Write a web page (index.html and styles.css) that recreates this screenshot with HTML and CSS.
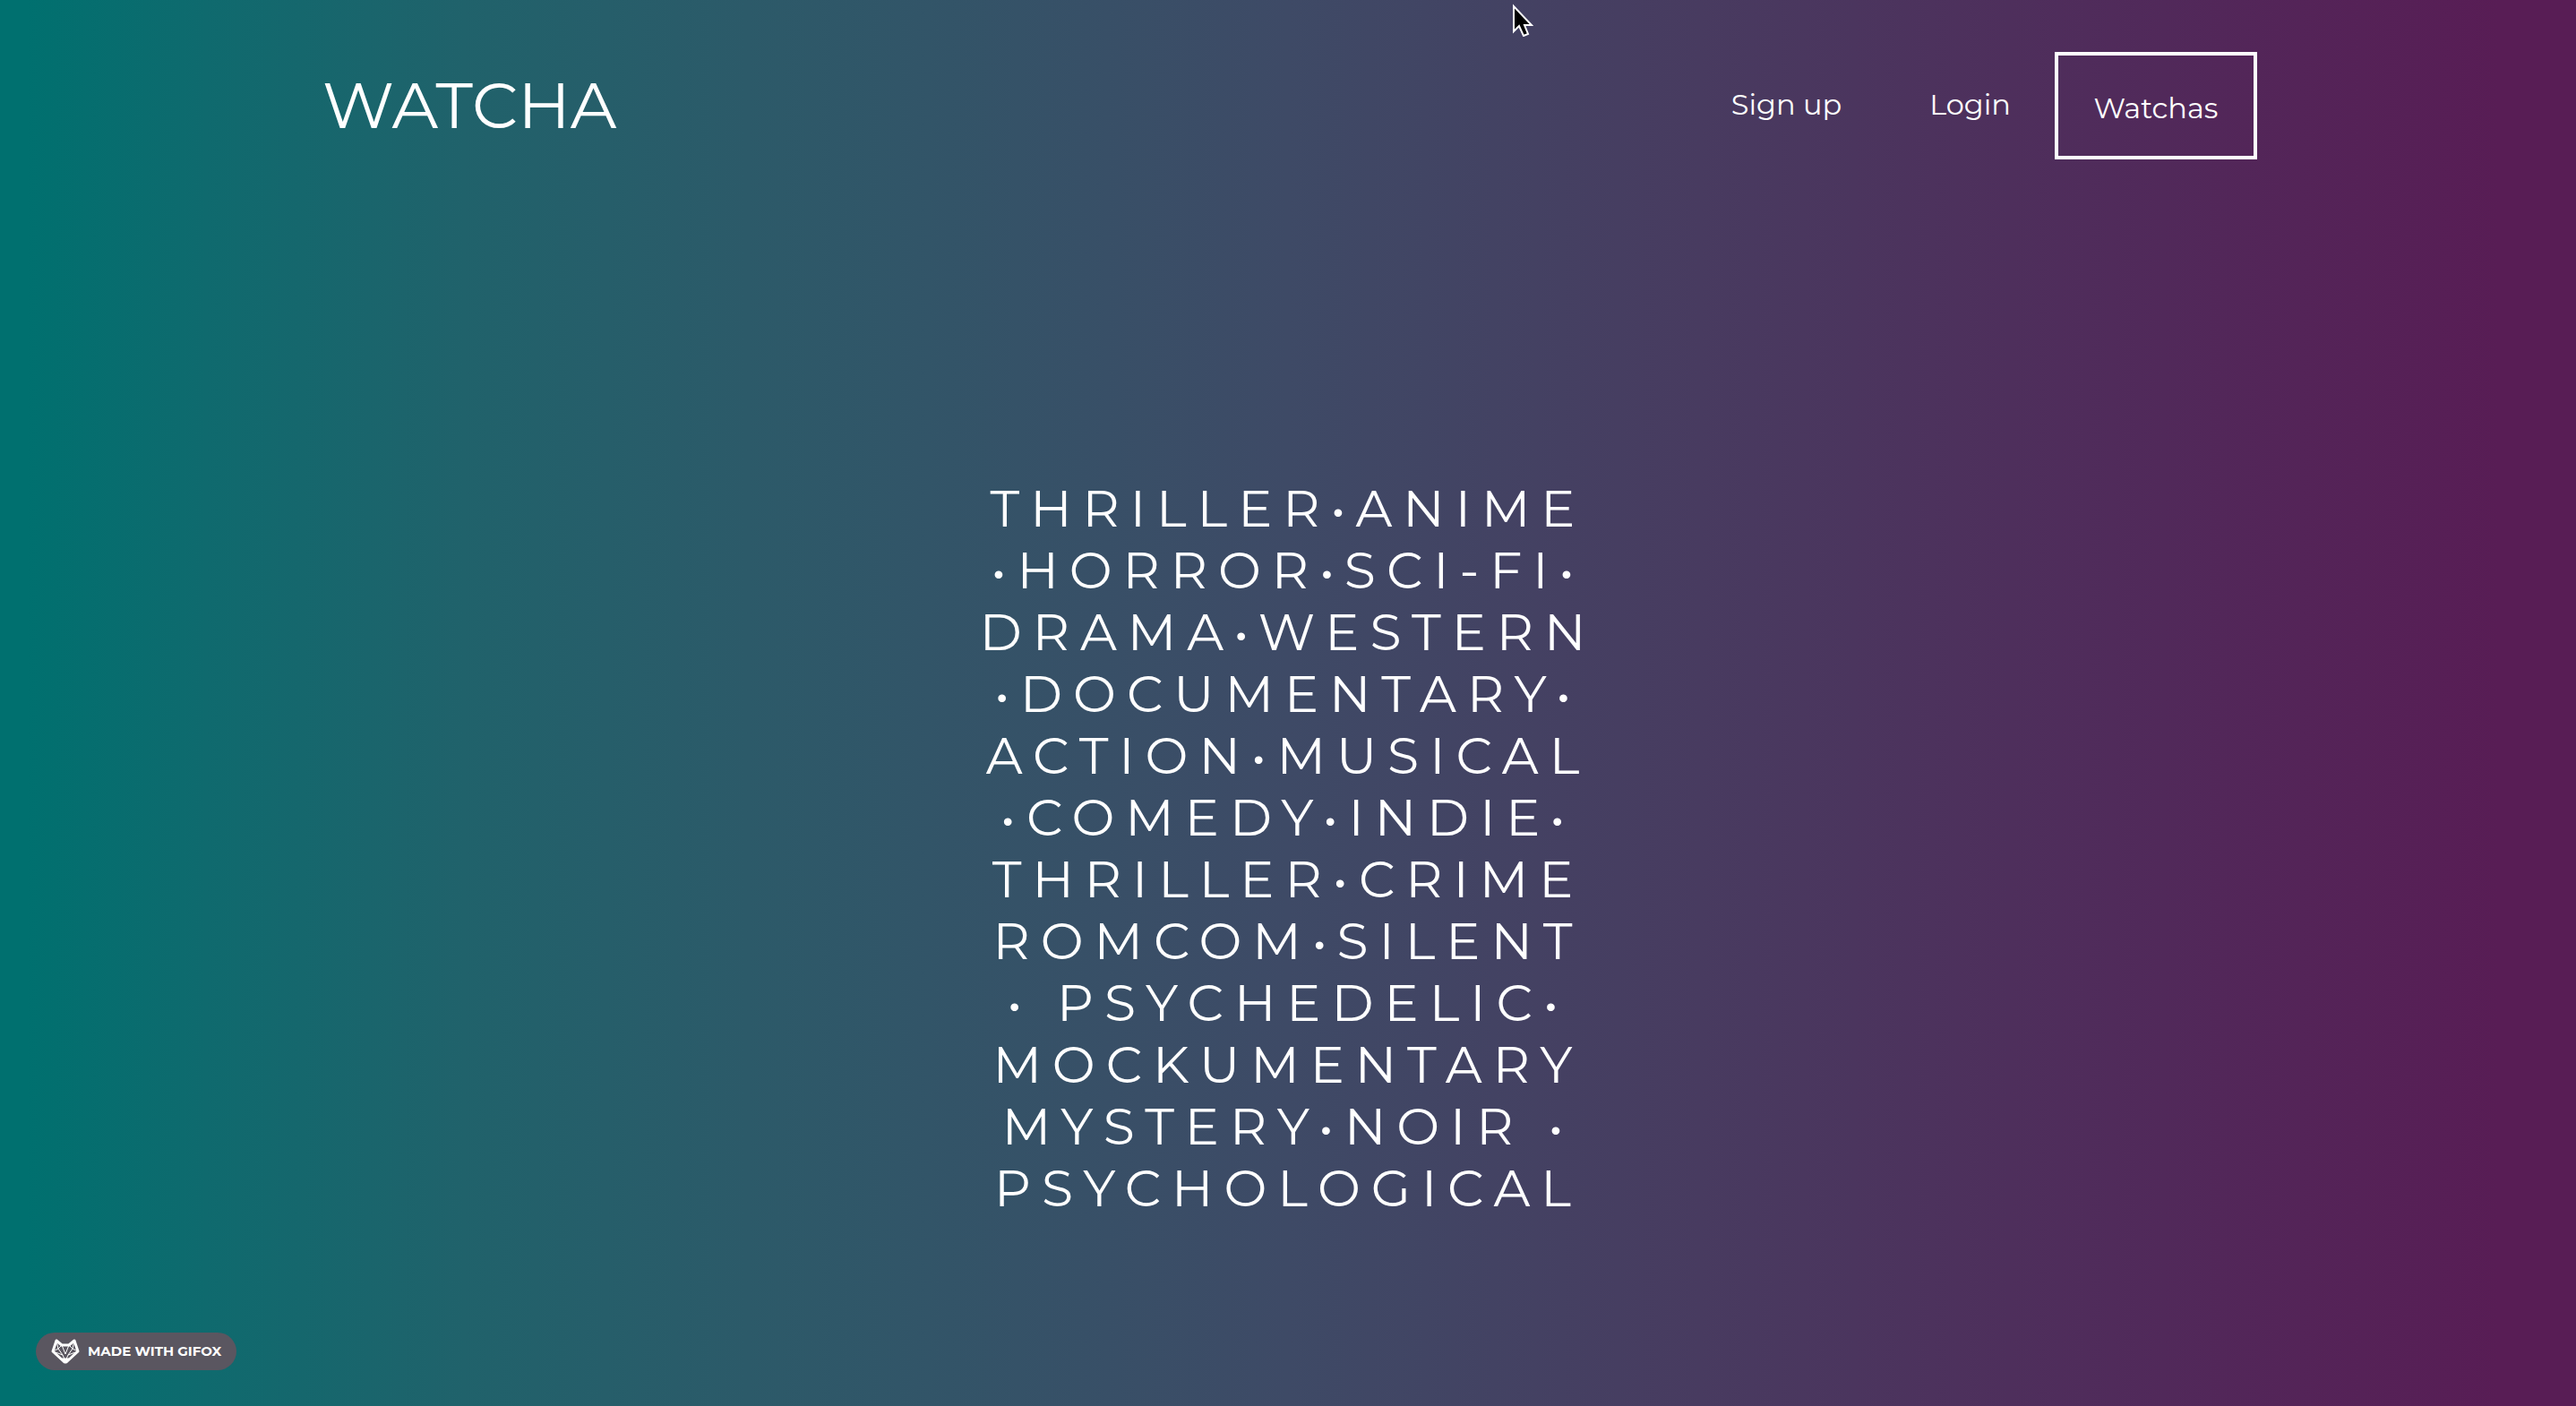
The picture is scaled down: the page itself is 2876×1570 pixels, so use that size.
FILE: index.html
```html
<!DOCTYPE html>
<html lang="en">
<head>
<meta charset="utf-8">
<title>Watcha</title>
<link rel="stylesheet" href="styles.css">
</head>
<body>
<header class="site-header">
  <a class="brand" href="#">WATCHA</a>
  <nav class="nav">
    <a class="nav-link" href="#">Sign up</a>
    <a class="nav-link" href="#">Login</a>
    <button class="nav-button" type="button">Watchas</button>
  </nav>
</header>
<main class="hero">
  <p class="genres">THRILLER•ANIME<br>•HORROR•SCI-FI•<br>DRAMA•WESTERN<br>•DOCUMENTARY•<br>ACTION•MUSICAL<br>•COMEDY•INDIE•<br>THRILLER•CRIME<br>ROMCOM•SILENT<br>• PSYCHEDELIC•<br>MOCKUMENTARY<br>MYSTERY•NOIR •<br>PSYCHOLOGICAL</p>
</main>
<a class="badge" href="#">
  <svg class="badge-icon" viewBox="0 0 32 30" aria-hidden="true"><path class="head" d="M6 3 L12 8 H20 L26 3 L30 15 L17 27 H15 L2 15 Z"/><path class="facets" d="M6 3 L8 12 L2 15 L13 19 L16 26 L19 19 L30 15 L24 12 L26 3 M12 8 L8 12 L13 19 M20 8 L24 12 L19 19 M12 8 L16 18 L20 8"/><path class="snout" d="M12 23 L20 23 L16 28 Z"/></svg>
  <span>MADE WITH GIFOX</span>
</a>
<svg class="cursor" viewBox="0 0 24 38" aria-hidden="true"><path d="M2 4 V32 L8 26 L13 37 L18 35 L14 25 H22 Z"/></svg>
</body>
</html>
```
FILE: styles.css
```css
* { box-sizing: border-box; }
body {
  margin: 0;
  min-height: 100vh;
  display: flex;
  flex-direction: column;
  color: #fff;
  font-family: Montserrat, Inter, sans-serif;
  background: linear-gradient(90deg, #00706f 1%, #0f6a6e 8%, #20626b 18%, #2c5a69 29%, #3e4a66 50%, #483b60 66%, #51295a 84%, #581d55 97%);
}
a { color: inherit; text-decoration: none; }
.site-header {
  display: flex;
  justify-content: space-between;
  align-items: flex-start;
  padding: 58px 356px 0 360px;
}
.brand { font-size: 72px; font-weight: 380; line-height: 119px; }
.nav { display: flex; align-items: flex-start; }
.nav-link { font-size: 32px; line-height: 118px; padding: 0 49px; }
.nav-button {
  width: 226px;
  height: 120px;
  padding: 6px 0 0;
  border: 4px solid #fff;
  background: none;
  color: inherit;
  font: 400 32px/36px Montserrat, Inter, sans-serif;
}
.hero { display: flex; justify-content: center; padding-top: 355px; }
.genres {
  margin: 0;
  font-size: 57px;
  font-weight: 400;
  line-height: 69px;
  letter-spacing: 12px;
  text-align: center;
}
.badge {
  position: fixed;
  left: 40px;
  bottom: 40px;
  height: 42px;
  padding: 0 17px 1px;
  border-radius: 21px;
  display: flex;
  align-items: center;
  gap: 9px;
  background: #5a5660;
  font-size: 15px;
  font-weight: 700;
}
.badge-icon { width: 32px; height: 30px; fill: none; stroke: #fff; stroke-linejoin: round; }
.head { stroke-width: 3; }
.facets { stroke-width: 1; }
.snout { fill: #fff; }
.cursor { position: absolute; left: 1688px; top: 3px; width: 24px; height: 38px; fill: #000; stroke: #fff; stroke-width: 2; }
```
